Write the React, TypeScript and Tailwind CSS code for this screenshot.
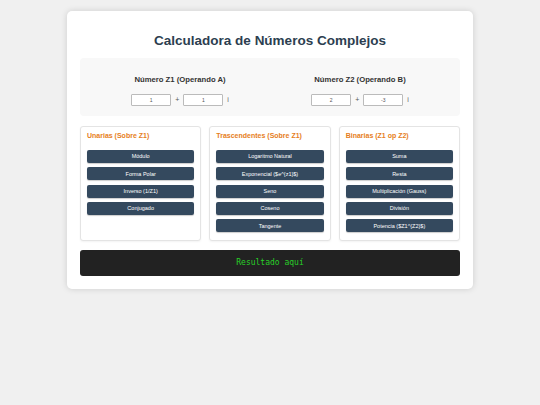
import React from 'react';

const unarias = ['Módulo', 'Forma Polar', 'Inverso (1/Z1)', 'Conjugado'];
const trascendentes = ['Logaritmo Natural', 'Exponencial ($e^{z1}$)', 'Seno', 'Coseno', 'Tangente'];
const binarias = ['Suma', 'Resta', 'Multiplicación (Gauss)', 'División', 'Potencia ($Z1^{Z2}$)'];

function Operand({ label, re, im }: { label: string; re: string; im: string }) {
  return (
    <div className="flex flex-col items-center">
      <h3 className="text-[7.7px] font-bold text-[#333] leading-[10px] mb-[9px]">{label}</h3>
      <div className="flex items-center gap-[4px] text-[7px] text-[#555]">
        <input
          readOnly
          value={re}
          className="w-[40px] h-[12px] border border-[#bbb] bg-white text-center text-[5px] rounded-[1px]"
        />
        <span>+</span>
        <input
          readOnly
          value={im}
          className="w-[40px] h-[12px] border border-[#bbb] bg-white text-center text-[5px] rounded-[1px]"
        />
        <span className="text-[#666]">i</span>
      </div>
    </div>
  );
}

function Group({ title, items }: { title: string; items: string[] }) {
  return (
    <div className="bg-white border border-[#e4e4e4] rounded-[3px] px-[6px] pt-[4px] pb-[8px] shadow-[0_1px_2px_rgba(0,0,0,0.05)]">
      <h4 className="text-[7px] font-bold text-[#e67e22] leading-[10px] mb-[9px]">{title}</h4>
      <div className="flex flex-col gap-[4.3px]">
        {items.map((t) => (
          <button
            key={t}
            className="h-[13px] w-full bg-[#34495e] text-white text-[5.5px] rounded-[2px] shadow-[0_1px_1px_rgba(0,0,0,0.2)]"
          >
            {t}
          </button>
        ))}
      </div>
    </div>
  );
}

export default function App() {
  return (
    <div className="min-h-[405px] w-full bg-[#f0f0f0] pt-[11px] font-['Liberation_Sans',Arial,sans-serif]">
      <div className="mx-auto w-[406px] bg-white rounded-[5px] shadow-[0_0_6px_rgba(0,0,0,0.15)] px-[13px] pt-[21px] pb-[13px]">
        <h1 className="text-center text-[13.5px] font-bold text-[#2c3e50] leading-[18px] mb-[8px]">
          Calculadora de Números Complejos
        </h1>

        <div className="bg-[#f8f8f8] rounded-[4px] grid grid-cols-2 pt-[17px] pb-[10px] px-[10px]">
          <Operand label="Número Z1 (Operando A)" re="1" im="1" />
          <Operand label="Número Z2 (Operando B)" re="2" im="-3" />
        </div>

        <div className="grid grid-cols-3 gap-[8px] mt-[10px]">
          <Group title="Unarias (Sobre Z1)" items={unarias} />
          <Group title="Trascendentes (Sobre Z1)" items={trascendentes} />
          <Group title="Binarias (Z1 op Z2)" items={binarias} />
        </div>

        <div className="mt-[9px] h-[26px] bg-[#222] rounded-[3px] flex items-center justify-center">
          <span className="text-[8px] text-[#28d028] font-['DejaVu_Sans_Mono',monospace]">Resultado aquí</span>
        </div>
      </div>
    </div>
  );
}
